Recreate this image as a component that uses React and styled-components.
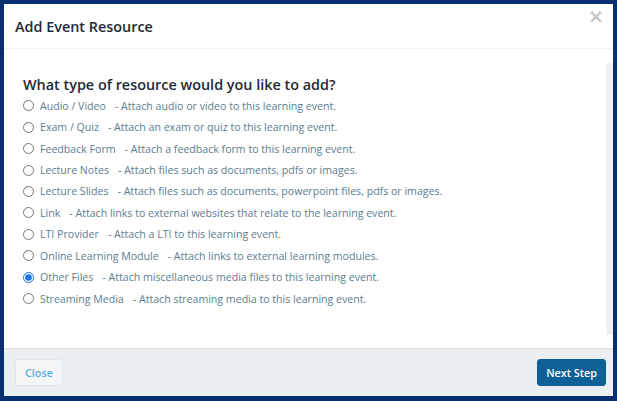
import React, { useState } from "react";
import styled, { createGlobalStyle } from "styled-components";

const resources = [
  { name: "Audio / Video", text: "Attach audio or video to this learning event." },
  { name: "Exam / Quiz", text: "Attach an exam or quiz to this learning event." },
  { name: "Feedback Form", text: "Attach a feedback form to this learning event." },
  { name: "Lecture Notes", text: "Attach files such as documents, pdfs or images." },
  { name: "Lecture Slides", text: "Attach files such as documents, powerpoint files, pdfs or images." },
  { name: "Link", text: "Attach links to external websites that relate to the learning event." },
  { name: "LTI Provider", text: "Attach a LTI to this learning event." },
  { name: "Online Learning Module", text: "Attach links to external learning modules." },
  { name: "Other Files", text: "Attach miscellaneous media files to this learning event." },
  { name: "Streaming Media", text: "Attach streaming media to this learning event." },
];

function App() {
  const [selected, setSelected] = useState("Other Files");

  return (
    <>
      <GlobalStyle />
      <Modal>
        <Header>
          <h4>Add Event Resource</h4>
          <CloseX>×</CloseX>
        </Header>
        <BodyWrap>
          <Body>
            <h3>What type of resource would you like to add?</h3>
            {resources.map((r) => (
              <Option key={r.name}>
                <input
                  type="radio"
                  name="resource"
                  checked={selected === r.name}
                  onChange={() => setSelected(r.name)}
                />
                <span className="name">{r.name}</span>
                <span className="desc">- {r.text}</span>
              </Option>
            ))}
          </Body>
          <ScrollTrack />
        </BodyWrap>
        <Footer>
          <Button>Close</Button>
          <Button primary>Next Step</Button>
        </Footer>
      </Modal>
    </>
  );
}

const GlobalStyle = createGlobalStyle`
  html, body {
    margin: 0;
    padding: 0;
    background: #073072;
  }
  body {
    font-family: "Open Sans", "Liberation Sans", sans-serif;
  }
  * {
    box-sizing: border-box;
  }
`;

const Modal = styled.div`
  margin: 4px 4px 0 4px;
  width: 609px;
  height: 392px;
  background: #fff;
  display: flex;
  flex-direction: column;
`;

const Header = styled.div`
  height: 45px;
  display: flex;
  align-items: center;
  justify-content: space-between;
  padding: 0 9px 0 11px;
  border-bottom: 1px solid #eef0f2;
  h4 {
    margin: 0;
    font-size: 14.4px;
    font-weight: 600;
    color: #1e2a36;
  }
`;

const CloseX = styled.span`
  align-self: flex-start;
  margin-top: 3px;
  font-family: "DejaVu Sans", sans-serif;
  font-size: 19px;
  font-weight: 700;
  color: #c6c6c6;
  line-height: 1;
`;

const BodyWrap = styled.div`
  flex: 1;
  display: flex;
`;

const Body = styled.div`
  flex: 1;
  padding: 25px 0 0 14px;
  h3 {
    margin: 0 0 0 5px;
    font-size: 14.4px;
    font-weight: 600;
    color: #1e2a36;
    line-height: 21px;
  }
`;

const Option = styled.label`
  display: flex;
  align-items: center;
  height: 21.45px;
  font-size: 10.6px;
  font-weight: 500;
  color: #5c7d90;
  input {
    margin: 0 6px 0 5px;
    width: 11px;
    height: 11px;
    accent-color: #1a73e8;
  }
  .desc {
    margin-left: 9px;
  }
`;

const ScrollTrack = styled.div`
  width: 7px;
  margin: 14px 0 13px;
  background: #f1f1f1;
`;

const Footer = styled.div`
  height: 48px;
  display: flex;
  align-items: center;
  justify-content: space-between;
  padding: 0 7px 0 11px;
  background: #eceff2;
  border-top: 1px solid #dde2e7;
`;

const Button = styled.button`
  height: 27px;
  padding: 0 ${(p) => (p.primary ? "8px" : "9px")};
  font-family: inherit;
  font-size: 10.8px;
  font-weight: 600;
  border-radius: 3px;
  border: 1px solid ${(p) => (p.primary ? "#0d5f93" : "#e2e6ea")};
  background: ${(p) => (p.primary ? "#0d6196" : "#f4f6f8")};
  color: ${(p) => (p.primary ? "#fff" : "#5aaee6")};
`;

export default App;
